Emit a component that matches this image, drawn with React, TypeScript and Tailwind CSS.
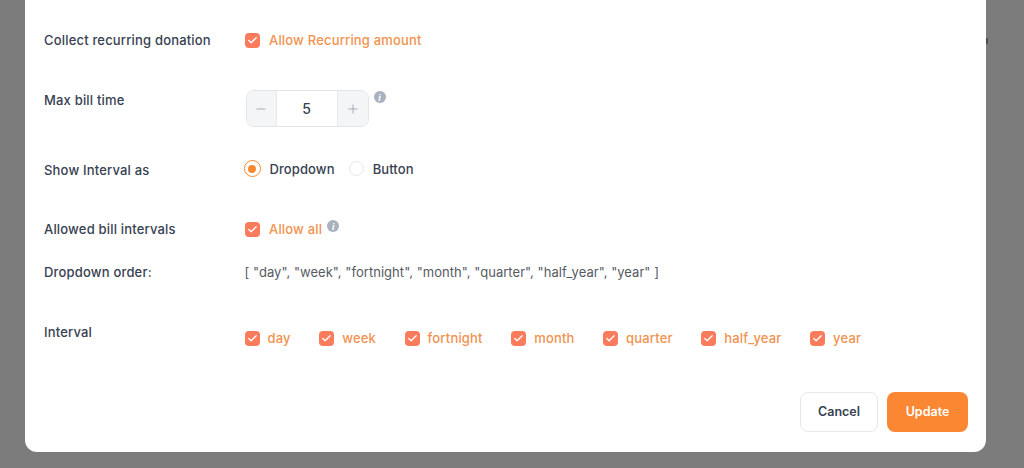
import type { ReactNode } from "react";
import { Check, Minus, Plus } from "lucide-react";

const intervals = ["day", "week", "fortnight", "month", "quarter", "half_year", "year"];

function CheckBox({ label, className = "" }: { label: string; className?: string }) {
  return (
    <label className={`flex items-center ${className}`}>
      <span className="flex h-[15px] w-[15px] items-center justify-center rounded-[4px] bg-[#fb7c5c]">
        <Check className="h-[11px] w-[11px] text-white" strokeWidth={3} />
      </span>
      <span className="text-[13px] font-medium leading-4 tracking-[0.18px] text-[#f2924f]">{label}</span>
    </label>
  );
}

function InfoDot({ className = "" }: { className?: string }) {
  return (
    <span className={`flex h-3 w-3 items-center justify-center rounded-full bg-[#a9b1bf] ${className}`}>
      <span className="text-[9px] font-bold italic leading-none text-white">i</span>
    </span>
  );
}

function Row({ label, className = "", children }: { label: string; className?: string; children: ReactNode }) {
  return (
    <div className={`flex items-start ${className}`}>
      <div className="w-[200.5px] shrink-0 text-[13px] font-medium leading-4 tracking-[0.18px] text-[#374151]">{label}</div>
      {children}
    </div>
  );
}

export default function App() {
  return (
    <div className="relative h-[468px] w-[1024px] overflow-hidden bg-[#7b7c7b] font-['Inter',sans-serif]">
      <div className="ml-[25px] flex h-[452px] w-[961px] flex-col rounded-b-xl bg-white pl-[19px] pr-[18px] pt-8">
        <Row label="Collect recurring donation">
          <CheckBox label="Allow Recurring amount" className="[&>span:last-child]:ml-[9.5px]" />
        </Row>

        <Row label="Max bill time" className="mt-11">
          <div className="-mt-[2px] ml-[1px] flex h-[37px] w-[123px] overflow-hidden rounded-lg border border-[#e2e5ea] bg-white">
            <span className="flex w-[30px] items-center justify-center border-r border-[#e8eaee] bg-[#f3f5f7] text-[#8b93a1]">
              <Minus className="h-[14px] w-[14px]" strokeWidth={1.25} />
            </span>
            <span className="flex flex-1 items-center justify-center text-sm font-medium text-[#374151]">5</span>
            <span className="flex w-[31px] items-center justify-center border-l border-[#e8eaee] bg-[#f3f5f7] text-[#8b93a1]">
              <Plus className="h-[14px] w-[14px]" strokeWidth={1.25} />
            </span>
          </div>
          <InfoDot className="ml-[5px] -mt-[1px]" />
        </Row>

        <Row label="Show Interval as" className="mt-[35px]">
          <div className="-mt-[2px] flex items-center text-[13px] font-medium leading-4 tracking-[0.1px] text-[#374151]">
            <span className="-ml-[1px] flex h-[17px] w-[17px] items-center justify-center rounded-full border-[1.5px] border-[#f58a33]">
              <span className="h-2 w-2 rounded-full bg-[#f58a33]" />
            </span>
            <span className="ml-[9px]">Dropdown</span>
            <span className="ml-[14px] h-[15px] w-[15px] rounded-full border border-[#e5e7eb]" />
            <span className="ml-[9px]">Button</span>
          </div>
        </Row>

        <Row label="Allowed bill intervals" className="mt-[43px]">
          <CheckBox label="Allow all" className="[&>span:last-child]:ml-[9.5px]" />
          <InfoDot className="ml-[5px] -mt-[1px]" />
        </Row>

        <Row label="Dropdown order:" className="mt-[27px]">
          <span className="text-[13px] leading-4 tracking-[0.04px] text-[#565b63]">
            {'[ "day", "week", "fortnight", "month", "quarter", "half_year", "year" ]'}
          </span>
        </Row>

        <Row label="Interval" className="mt-11">
          <div className="mt-[6px] flex items-center gap-[28.5px]">
            {intervals.map((name) => (
              <CheckBox key={name} label={name} className="[&>span:last-child]:ml-[8px]" />
            ))}
          </div>
        </Row>

        <div className="mt-[46px] flex justify-end gap-[9px]">
          <button className="h-10 w-[78px] rounded-lg border border-[#e5e7eb] bg-white text-[12.5px] font-semibold text-[#374151]">
            Cancel
          </button>
          <button className="h-10 w-[81px] rounded-lg bg-[#fb8733] text-[12.5px] font-semibold text-white">Update</button>
        </div>
      </div>
      <span className="absolute left-[986px] top-[38px] h-[6px] w-[2px] rounded-sm bg-[#4b4c4b]" />
    </div>
  );
}
